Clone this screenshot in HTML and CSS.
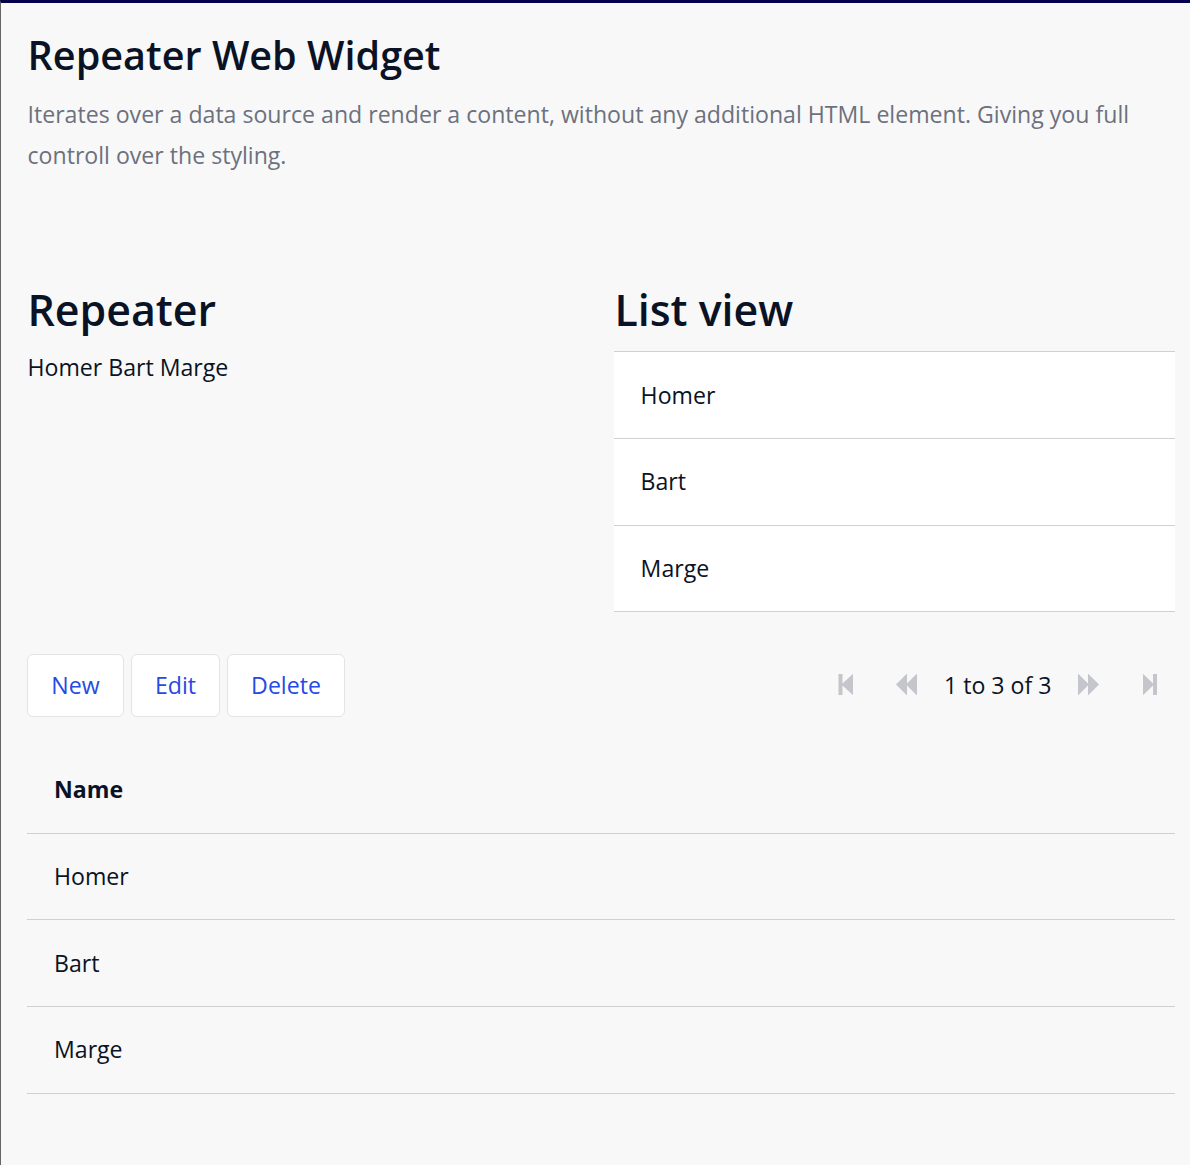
FILE: index.html
```html
<!DOCTYPE html>
<html lang="en">
<head>
<meta charset="utf-8">
<title>Repeater Web Widget</title>
<link rel="stylesheet" href="styles.css">
</head>
<body>
<main class="page">
  <header class="intro">
    <h1>Repeater Web Widget</h1>
    <p>Iterates over a data source and render a content, without any additional HTML element. Giving you full controll over the styling.</p>
  </header>
  <div class="columns">
    <section>
      <h2>Repeater</h2>
      <p class="names">Homer Bart Marge</p>
    </section>
    <section>
      <h2>List view</h2>
      <ul class="list">
        <li>Homer</li>
        <li>Bart</li>
        <li>Marge</li>
      </ul>
    </section>
  </div>
  <div class="toolbar">
    <div class="actions">
      <button class="btn btn-new">New</button>
      <button class="btn btn-edit">Edit</button>
      <button class="btn btn-delete">Delete</button>
    </div>
    <nav class="paging">
      <svg class="first" width="15" height="21" viewBox="0 0 15 21"><path d="M.5 0h4v9.500L14.500.3h.5v20.400h-.5L4.500 11.500V21h-4z"/></svg>
      <svg class="prev" width="21" height="21" viewBox="0 0 21 21"><path d="M0 10.500L10.500 0h.5v9.500L20.500 0h.5v21h-.5L11 11.500V21h-.5z"/></svg>
      <span class="status">1 to 3 of 3</span>
      <svg class="next" width="21" height="21" viewBox="0 0 21 21"><path d="M21 10.500L10.500 0H10v9.500L.5 0H0v21h.5L10 11.500V21h.5z"/></svg>
      <svg class="last" width="15" height="21" viewBox="0 0 15 21"><path d="M15 0h-4v9.500L1.500.3H1v20.400h.5L11 11.500V21h4z"/></svg>
    </nav>
  </div>
  <table class="grid">
    <thead><tr><th>Name</th></tr></thead>
    <tbody>
      <tr><td>Homer</td></tr>
      <tr><td>Bart</td></tr>
      <tr><td>Marge</td></tr>
    </tbody>
  </table>
</main>
</body>
</html>
```
FILE: styles.css
```css
* { box-sizing: border-box; }
body {
  margin: 0;
  background: #f8f8f8;
  color: #0a1325;
  font: 400 23.11px/33px "Open Sans", sans-serif;
}
.page {
  height: 1165px;
  padding: 24px 15px 0 26px;
  border-top: 3px solid #05004d;
  border-left: 1px solid #666;
}
h1, h2, p { margin: 0; }
h1, h2 { font-weight: 600; }
h1 { padding-left: 0.6px; font-size: 39.6px; line-height: 56px; }
h2 { padding-left: 0.4px; font-size: 42.9px; line-height: 56px; }
.intro { height: 255px; }
.intro p { margin-top: 11px; padding-left: 0.5px; line-height: 41px; color: #6c717e; }
.columns { display: grid; grid-template-columns: 561px 561px; gap: 26px; height: 372px; }
.names { margin-top: 13px; padding-left: 0.5px; }
.list { margin: 13.3px 0 0; padding: 0; list-style: none; background: #fff; border-top: 1px solid #ced0d3; }
.list li { height: 86.67px; padding: 26.3px 26.6px; border-bottom: 1px solid #ced0d3; }
.toolbar { display: flex; justify-content: space-between; height: 92px; }
.actions { display: flex; gap: 7px; }
.btn {
  height: 63px;
  padding: 0;
  font: inherit;
  color: #264ae5;
  background: #fff;
  border: 1px solid #e4e4e6;
  border-radius: 6px;
}
.btn-new { width: 97px; }
.btn-edit { width: 89px; }
.btn-delete { width: 118px; }
.paging { display: flex; align-items: center; height: 61px; padding-right: 18px; }
.paging svg { fill: #c5c6cc; }
.prev { margin-left: 43px; }
.status { width: 107px; margin: 1px 27px 0; white-space: nowrap; }
.last { margin-left: 43px; }
.grid { width: 100%; border-collapse: separate; border-spacing: 0; }
.grid th, .grid td { padding: 0 27px; text-align: left; border-bottom: 1px solid #ced0d3; }
.grid th { height: 88px; font-weight: 700; }
.grid td { height: 87px; }
.grid tr:first-child td { height: 86px; }
.grid tr:last-child td { padding-bottom: 1px; }
```
